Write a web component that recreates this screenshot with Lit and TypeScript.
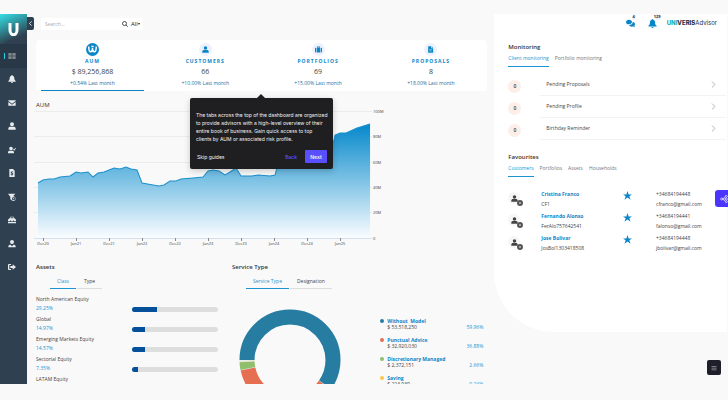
import { LitElement, css, html, nothing, svg } from 'lit';
import { customElement } from 'lit/decorators.js';
import { classMap } from 'lit/directives/class-map.js';
import { styleMap } from 'lit/directives/style-map.js';

// Icons share a 24x24 box and take the current text colour
const icons = {
  grid: svg`<path d="M1 3h10v8H1zM13 3h10v8H13zM1 13h10v8H1zM13 13h10v8H13z"/>`,
  bell: svg`<path d="M12 0a2 2 0 0 0-2 2C6 3 5 7 5 10c0 4-1 6-4 8v2h22v-2c-3-2-4-4-4-8 0-3-1-7-5-8a2 2 0 0 0-2-2zM9 21a3 3 0 0 0 6 0z"/>`,
  mail: svg`<path d="M1 4h22v2l-11 8L1 6zM1 9l11 8 11-8v11H1z"/>`,
  user: svg`<path d="M12 1a6 6 0 1 1 0 12 6 6 0 0 1 0-12zM1 23v-4c0-3 3-5 6-5h10c3 0 6 2 6 5v4z"/>`,
  userTie: svg`<path fill-rule="evenodd" d="M12 0a6 6 0 1 1 0 12 6 6 0 0 1 0-12zM1 22v-3c0-3 3-5 7-5l3 5 1-3 1 3 3-5c4 0 7 2 7 5v3z"/>`,
  userCheck: svg`<path d="M9 2a5 5 0 1 1 0 11A5 5 0 0 1 9 2zM0 22v-3c0-3 2-5 5-5h8c3 0 5 2 5 5v3zM15 10l2-2 2 2 4-5 1 2-5 7z"/>`,
  doc: svg`<path fill-rule="evenodd" d="M4 0h11l5 5v19H4zM11 6v2c-4 1-4 5 0 6 2 1 2 2 0 2H8v2h3v2h2v-2c4-1 4-5 0-6-2-1-2-2 0-2h3V8h-3V6z"/>`,
  filter: svg`<path fill-rule="evenodd" d="M0 2h22l-7 8a7 7 0 1 1-4 12l-4-3v-8zM17 12a5 5 0 1 0 0 10 5 5 0 0 0 0-10zM16 14h2v3h2v2h-4z"/>`,
  briefcase: svg`<path fill-rule="evenodd" d="M7 7V2h10v5h3l4 4v4h-6v-2h-2v2H8v-2H6v2H0v-4l4-4zM9 4v3h6V4zM0 17h6v1h2v-1h8v1h2v-1h6v5H0z"/>`,
  suitcase: svg`<path fill-rule="evenodd" d="M7 6V2h10v4h1v16H6V6zM9 4v2h6V4zM0 8l2-2h2v16H2l-2-2zM24 8l-2-2h-2v16h2l2-2z"/>`,
  logout: svg`<path d="M9 3v3H4v12h5v3H3c-2 0-3-1-3-3V6c0-2 1-3 3-3zM14 4l10 8-10 8v-5H7V9h7z"/>`,
  file: svg`<path fill-rule="evenodd" d="M4 1h10v7h7v15H4zM16 1l5 5h-5zM8 12v2h8v-2zM8 16v2h8v-2z"/>`,
  chat: svg`<path d="M8 2c5 0 8 3 8 6s-3 6-8 6c-2 0-3 0-4-1l-4 1 2-3C0 9 0 9 0 8c0-3 3-6 8-6zM18 8c4 1 6 3 6 6 0 1 0 2-2 4l2 4-5-2c-5 1-9 0-11-4 6 0 10-3 10-8z"/>`,
  star: svg`<path d="M12 0l3 9h9l-7 5 3 9-8-6-8 6 3-9-7-5h9z"/>`,
  chevron: svg`<path fill="none" stroke="currentColor" stroke-width="3" d="M7 2l10 10L7 22"/>`,
  collapse: svg`<path fill="none" stroke="currentColor" stroke-width="4" d="M17 2L7 12l10 10"/>`,
  search: svg`<path fill="none" stroke="currentColor" stroke-width="3" d="M10 2a8 8 0 1 1 0 16 8 8 0 0 1 0-16zM16 16l7 7"/>`,
  share: svg`<path fill="none" stroke="currentColor" stroke-width="2" d="M8 12l8-7M8 12h8M8 12l8 7M5 9a3 3 0 1 1 0 6 3 3 0 0 1 0-6zM19 1a3 3 0 1 1 0 6 3 3 0 0 1 0-6zM19 9a3 3 0 1 1 0 6 3 3 0 0 1 0-6zM19 17a3 3 0 1 1 0 6 3 3 0 0 1 0-6z"/>`,
  menu: svg`<path d="M2 4h20v3H2zM2 11h20v3H2zM2 18h20v3H2z"/>`,
  brand: svg`<path fill="none" stroke="currentColor" stroke-width="4" d="M2 4c0 8 1 14 5 14s5-5 5-10c0 5 1 10 5 10s5-6 5-14M9 4h6"/>`,
};

type IconName = keyof typeof icons;

const icon = (name: IconName) =>
  html`<svg class="icon" viewBox="0 0 24 24" aria-hidden="true">${icons[name]}</svg>`;

const NAV: [IconName, string][] = [
  ['grid', 'Dashboard'],
  ['bell', 'Alerts'],
  ['mail', 'Mail'],
  ['user', 'Customers'],
  ['userCheck', 'Prospects'],
  ['doc', 'Proposals'],
  ['filter', 'Filters'],
  ['briefcase', 'Portfolios'],
  ['userTie', 'Profile'],
  ['logout', 'Log out'],
];

const STATS: { icon: IconName; label: string; value: string; delta: string }[] = [
  { icon: 'brand', label: 'AUM', value: '$ 89,256,868', delta: '+0.54% Last month' },
  { icon: 'user', label: 'CUSTOMERS', value: '66', delta: '+10.00% Last month' },
  { icon: 'suitcase', label: 'PORTFOLIOS', value: '69', delta: '+15.00% Last month' },
  { icon: 'file', label: 'PROPOSALS', value: '8', delta: '+18.00% Last month' },
];

const AUM_LINE =
  '2,72 7,69 13,68 18,68 24,66 34,65 40,61 45,62 52,61 57,66 62,62 68,61 78,57 84,58 90,56 95,58 101,59 ' +
  '106,72 117,74 123,75 128,74 134,70 140,70 145,68 157,67 167,66 172,60 177,59 183,60 189,64 194,61 ' +
  '200,57 205,65 216,65 222,64 234,65 239,64 241,56 246,46 270,45 290,40 297,33 299,24 304,22 310,22 321,17 334,13';
const MONTHS = ['Dec20', 'Jun21', 'Dec21', 'Jun22', 'Dec22', 'Jun23', 'Dec23', 'Jun24', 'Dec24', 'Jun25'];
const LEVELS = ['100M', '80M', '60M', '40M', '20M', '0'];

const ASSETS: { name: string; share?: number }[] = [
  { name: 'North American Equity', share: 29.25 },
  { name: 'Global', share: 14.97 },
  { name: 'Emerging Markets Equity', share: 14.57 },
  { name: 'Sectorial Equity', share: 7.35 },
  { name: 'LATAM Equity' },
];

const SERVICES = [
  { name: 'Without  Model', amount: '$ 53,518,250', share: 59.96, color: '#277da1' },
  { name: 'Punctual Advice', amount: '$ 32,920,030', share: 36.88, color: '#e76f51' },
  { name: 'Discretionary Managed', amount: '$ 2,372,151', share: 2.66, color: '#90be6d' },
  { name: 'Saving', amount: '$ 223,939', share: 0.24, color: '#f9c74f' },
];

const MONITORING = ['Pending Proposals', 'Pending Profile', 'Birthday Reminder'];

const FAVOURITES = [
  { name: 'Cristina Franco', code: 'CF1', phone: '+34684194448', mail: 'cfranco@gmail.com' },
  { name: 'Fernando Alonso', code: 'FerAlo757642541', phone: '+34684194441', mail: 'falonso@gmail.com' },
  { name: 'Jose Bolivar', code: 'JosBol1303418508', phone: '+34684194448', mail: 'jbolivar@gmail.com' },
];

@customElement('app-root')
export class AppRoot extends LitElement {
  static styles = css`
    :host {
      display: block;
      font: 5px/8px 'Open Sans', 'Noto Sans', sans-serif;
      color: #444;
    }
    * {
      box-sizing: border-box;
    }
    button,
    input,
    select {
      font: inherit;
      color: inherit;
      background: none;
      border: 0;
      margin: 0;
      padding: 0;
      min-width: 0;
    }
    h2,
    p,
    ul {
      margin: 0;
      padding: 0;
      list-style: none;
    }
    a {
      color: inherit;
      text-decoration: none;
    }
    h2 {
      font-size: 6px;
      font-weight: 600;
      color: #333;
    }
    .icon {
      display: block;
      flex: none;
      width: 8px;
      height: 8px;
      fill: currentColor;
    }
    .page {
      height: 100vh;
      padding: 14px 0 16px;
      background: #f9f9f9;
      overflow: hidden;
    }
    .shell {
      position: relative;
      height: 100%;
      display: grid;
      grid-template-columns: 27px 2fr 1fr;
      overflow: hidden;
    }

    /* sidebar */
    .side {
      background: #2f4050;
    }
    .logo {
      height: 30px;
      display: grid;
      place-items: center;
      background: linear-gradient(155deg, #37dfe6 0%, #30a2ab 30%, #2f4050 75%);
    }
    .logo svg {
      width: 12px;
      height: 14px;
    }
    .nav {
      height: 235px;
      display: grid;
      grid-auto-rows: 1fr;
    }
    .nav a {
      display: flex;
      align-items: center;
      padding-left: 8px;
      color: #e8ebee;
    }
    .nav .current {
      color: #7b858f;
      background: #293846;
      padding-left: 4px;
      gap: 3px;
    }
    .current::before {
      content: '';
      width: 1px;
      height: 6px;
      background: #23d5e0;
    }
    .collapse {
      position: absolute;
      left: 27px;
      top: 3px;
      width: 7px;
      height: 13px;
      display: grid;
      place-items: center;
      color: #fff;
      background: #2f4050;
      border-radius: 0 2px 2px 0;
    }
    .collapse .icon {
      width: 5px;
      height: 5px;
    }

    /* main column */
    .main {
      position: relative;
      min-width: 0;
      padding: 4px 7px 0 9px;
    }
    .search {
      display: flex;
      align-items: center;
      width: 102px;
      height: 12px;
      margin-left: 5px;
      padding: 0 3px 0 4px;
      background: #fff;
    }
    .search input {
      flex: 1;
    }
    .search input::placeholder {
      color: #aaa;
    }
    .search .icon {
      width: 6px;
      height: 6px;
      color: #222;
    }
    .search select {
      appearance: none;
      margin-left: 3px;
      font-size: 6px;
      color: #222;
    }
    .caret {
      border: 1px solid transparent;
      border-top: 2px solid #222;
    }
    .stats {
      display: grid;
      grid-template-columns: repeat(4, 1fr);
      height: 51px;
      margin-top: 10px;
      background: #fff;
      border-radius: 4px;
    }
    .stat {
      display: flex;
      flex-direction: column;
      align-items: center;
      margin: 0 5px;
      padding-top: 3px;
      border-bottom: 1px solid transparent;
      text-align: center;
    }
    .stat.on {
      border-color: #0b84c6;
    }
    .disc {
      display: grid;
      place-items: center;
      width: 13px;
      height: 13px;
      border-radius: 50%;
      color: #0a86c8;
      background: #edf1fd;
    }
    .disc .icon {
      width: 7px;
      height: 7px;
    }
    .on .disc {
      color: #fff;
      background: #0a86c8;
    }
    .on .disc .icon {
      width: 9px;
      height: 9px;
    }
    .stat-label {
      margin-top: 1px;
      font-weight: 700;
      letter-spacing: 1px;
      color: #0a86c8;
    }
    .stat-value {
      margin-top: 3px;
      font-size: 7px;
    }
    .stat-delta {
      margin-top: 3px;
      color: #246f9f;
    }
    .aum-title {
      margin-top: 10px;
      font-weight: 400;
    }
    .chart {
      display: block;
      width: 80%;
      margin-top: 2px;
      overflow: visible;
    }
    .chart text {
      font-size: 4px;
      fill: #444;
    }
    .panels {
      display: grid;
      grid-template-columns: 196px 1fr;
      margin-top: 14px;
    }
    .switch {
      display: flex;
      gap: 1px;
      margin: 6px 0 0 14px;
    }
    .switch button {
      height: 12px;
      padding: 0 7px 4px;
      border-bottom: 1px solid #ddd;
    }
    .switch .on {
      color: #1c94d2;
      border-color: #1c94d2;
    }
    .asset {
      display: grid;
      grid-template-columns: 96px 86px;
      align-items: start;
      height: 20px;
      line-height: 9px;
    }
    .assets {
      margin-top: 6px;
    }
    .pct {
      color: #1c94d2;
    }
    .bar {
      height: 5px;
      margin-top: 12px;
      border-radius: 3px;
      background: #dedede;
      overflow: hidden;
    }
    .fill {
      height: 100%;
      background: #04509a;
    }
    .service {
      display: flex;
      justify-content: space-between;
      margin-top: 20px;
      padding: 0 4px 0 7px;
    }
    .donut {
      width: 102px;
      height: 102px;
    }
    .legend {
      width: 103px;
      margin-top: 9px;
    }
    .legend li {
      display: grid;
      grid-template-columns: 7px 1fr auto;
      align-items: center;
      height: 19px;
      line-height: 6px;
      align-content: start;
    }
    .dot {
      width: 4px;
      height: 4px;
      border-radius: 50%;
    }
    .strong {
      grid-column: 2 / 4;
      font-weight: 700;
      color: #0a86c8;
      white-space: pre;
    }
    .amount {
      grid-column: 2;
    }

    /* product tour */
    .tour {
      position: absolute;
      left: 163px;
      top: 84px;
      width: 143px;
      height: 71px;
      padding: 13px 6px 6px;
      border-radius: 2px;
      font-family: Inter, sans-serif;
      color: #f2f2f2;
      background: #1f1f21;
      box-shadow: 0 2px 6px #0003;
      white-space: nowrap;
    }
    .tour::before {
      content: '';
      position: absolute;
      left: 67px;
      top: -4px;
      border: 4px solid transparent;
      border-top: 0;
      border-bottom-color: #1f1f21;
    }
    .tour-actions {
      display: flex;
      align-items: center;
      gap: 8px;
      margin-top: 7px;
    }
    .tour-actions button {
      height: 13px;
    }
    .skip {
      margin: 0 auto 0 1px;
    }
    .tour-actions .back {
      font-weight: 500;
      color: #5a4fff;
    }
    .tour-actions .next {
      width: 22px;
      font-weight: 600;
      border-radius: 1px;
      background: #5a4fff;
    }

    /* right column */
    .aside {
      align-self: start;
      height: 318px;
      background: #fff;
      border-bottom-left-radius: 60px;
      border-right: 1px solid #fafafa;
      padding: 0 1px 0 14px;
    }
    .top {
      display: flex;
      justify-content: flex-end;
      align-items: center;
      height: 18px;
      padding-right: 9px;
    }
    .alert {
      position: relative;
      margin-right: 13px;
      color: #0a86c8;
    }
    .alert:last-of-type {
      margin-right: 10px;
    }
    .alert .icon {
      width: 9px;
      height: 9px;
    }
    .badge {
      position: absolute;
      left: 6px;
      top: -5px;
      min-width: 4px;
      border-radius: 4px;
      font-size: 4px;
      line-height: 6px;
      font-weight: 700;
      color: #333;
      background: #edf1fd;
    }
    .wordmark {
      font: 6px/8px Inter, sans-serif;
      color: #1e2f45;
    }
    .wordmark b {
      font-weight: 800;
    }
    .uni {
      color: #14aeb9;
    }
    .monitoring {
      margin-top: 11px;
    }
    .tabs {
      display: flex;
      gap: 6px;
      margin-top: 3px;
      color: #777;
    }
    .tabs button {
      height: 13px;
      padding-bottom: 4px;
      border-bottom: 1px solid transparent;
    }
    .tabs .on {
      color: #1c94d2;
      border-color: #1c94d2;
    }
    .tasks {
      margin-top: 7px;
    }
    .task {
      display: grid;
      grid-template-columns: 32px 1fr;
      align-items: center;
      height: 22px;
    }
    .count {
      display: grid;
      place-items: center;
      width: 13px;
      height: 13px;
      margin-top: 2px;
      border-radius: 50%;
      font-weight: 600;
      background: #fdeee8;
    }
    .task a {
      display: flex;
      justify-content: space-between;
      height: 22px;
      padding: 6px 9px 0 6px;
      border-bottom: 1px solid #f3f3f3;
    }
    .task .icon {
      width: 7px;
      height: 7px;
      margin-top: 1px;
      color: #aaa;
    }
    .favourites {
      margin-top: 13px;
    }
    .people {
      margin-top: 12px;
    }
    .person {
      display: grid;
      grid-template-columns: 33px 1fr 29px 70px;
      height: 22px;
      line-height: 10px;
    }
    .avatar {
      position: relative;
      display: grid;
      place-items: center;
      width: 12px;
      height: 12px;
      margin-top: 3px;
      border-radius: 50%;
      color: #444;
      background: #f6f6f6;
    }
    .avatar .icon {
      width: 7px;
      height: 7px;
    }
    .tag {
      position: absolute;
      right: -3px;
      bottom: -2px;
      width: 6px;
      height: 6px;
      border-radius: 50%;
      border: 2px solid #555;
      background: #bbb;
    }
    .person .star {
      align-self: start;
      justify-self: start;
      margin: 2px 0 0 -4px;
      color: #0a86c8;
    }
    .star .icon {
      width: 9px;
      height: 9px;
    }
    .share {
      position: absolute;
      right: 0;
      top: 176px;
      width: 13px;
      height: 17px;
      padding-left: 5px;
      overflow: hidden;
      border-radius: 3px 0 0 3px;
      color: #fff;
      background: #4a35ff;
    }
    .menu {
      position: absolute;
      right: 7px;
      bottom: 9px;
      width: 14px;
      height: 15px;
      display: grid;
      place-items: center;
      border-radius: 2px;
      color: #999;
      background: #1f1f2b;
    }
    .menu .icon {
      width: 6px;
      height: 6px;
    }
  `;

  private renderTabs(labels: string[], kind: string) {
    return html`
      <div class=${kind} role="tablist">
        ${labels.map(
          (label, i) => html`<button role="tab" class=${classMap({ on: i === 0 })}>${label}</button>`,
        )}
      </div>
    `;
  }

  private renderChart() {
    return html`
      <svg class="chart" viewBox="0 0 361 138" role="img" aria-label="AUM by month">
        <defs>
          <linearGradient id="fade" x1="0" y1="0" x2="0" y2="1">
            <stop offset="0" stop-color="#0488cb" />
            <stop offset="1" stop-color="#fafdff" />
          </linearGradient>
        </defs>
        ${LEVELS.map((label, i) => {
          const y = 1 + Math.round(i * 25.3);
          return svg`
            <path d="M-2 ${y - 0.5}H336" stroke=${label === '0' ? '#d5dff0' : '#ececec'} />
            <text x="337" y=${y + 1}>${label}</text>
          `;
        })}
        <polygon points="2,127 ${AUM_LINE} 334,127" fill="url(#fade)" />
        <polyline points=${AUM_LINE} fill="none" stroke="#1b90cc" />
        ${MONTHS.map(
          (label, i) => svg`
            <path d="M${7.5 + i * 33} 127v3" stroke="#888" />
            <text x=${7 + i * 33} y="134" text-anchor="middle">${label}</text>
          `,
        )}
      </svg>
    `;
  }

  private renderDonut() {
    // slices run clockwise from nine o'clock, radius 43 with a 15px ring
    let start = 0;
    return html`
      <svg class="donut" viewBox="0 0 102 102" role="img" aria-label="Service type split">
        <circle cx="51" cy="51" r="43" fill="none" stroke="#e3eef3" stroke-width="15" />
        ${SERVICES.map((s) => {
          const slice = svg`
            <circle cx="51" cy="51" r="43" fill="none" stroke=${s.color} stroke-width="15"
              pathLength="100" stroke-dasharray="${Math.max(s.share - 0.2, 0.1)} 100"
              stroke-dashoffset=${-start} transform="rotate(180 51 51)" />
          `;
          start += s.share;
          return slice;
        })}
      </svg>
    `;
  }

  private renderAsset(name: string, share?: number) {
    return html`
      <li class="asset">
        <div>
          <p>${name}</p>
          ${share ? html`<p class="pct">${share}%</p>` : nothing}
        </div>
        ${share
          ? html`<div class="bar"><div class="fill" style=${styleMap({ width: `${share}%` })}></div></div>`
          : nothing}
      </li>
    `;
  }

  private renderMain() {
    return html`
      <main class="main">
        <div class="search">
          <input type="text" placeholder="Search..." aria-label="Search" />
          ${icon('search')}
          <select aria-label="Scope">
            <option>All</option>
          </select>
          <span class="caret"></span>
        </div>
        <div class="stats" role="tablist">
          ${STATS.map(
            (s, i) => html`
              <button role="tab" class=${classMap({ stat: true, on: i === 0 })}>
                <span class="disc">${icon(s.icon)}</span>
                <span class="stat-label">${s.label}</span>
                <span class="stat-value">${s.value}</span>
                <span class="stat-delta">${s.delta}</span>
              </button>
            `,
          )}
        </div>
        <h2 class="aum-title">AUM</h2>
        ${this.renderChart()}
        <div class="panels">
          <section>
            <h2>Assets</h2>
            ${this.renderTabs(['Class', 'Type'], 'switch')}
            <ul class="assets">
              ${ASSETS.map((a) => this.renderAsset(a.name, a.share))}
            </ul>
          </section>
          <section>
            <h2>Service Type</h2>
            ${this.renderTabs(['Service Type', 'Designation'], 'switch')}
            <div class="service">
              ${this.renderDonut()}
              <ul class="legend">
                ${SERVICES.map(
                  (s) => html`
                    <li>
                      <span class="dot" style=${styleMap({ background: s.color })}></span>
                      <span class="strong">${s.name}</span>
                      <span class="amount">${s.amount}</span>
                      <span class="pct">${s.share}%</span>
                    </li>
                  `,
                )}
              </ul>
            </div>
          </section>
        </div>
        <div class="tour" role="dialog" aria-label="Guide">
          <p>
            The tabs across the top of the dashboard are organized<br />
            to provide advisors with a high-level overview of their<br />
            entire book of business. Gain quick access to top<br />
            clients by AUM or associated risk profile.
          </p>
          <div class="tour-actions">
            <button class="skip">Skip guides</button>
            <button class="back">Back</button>
            <button class="next">Next</button>
          </div>
        </div>
      </main>
    `;
  }

  private renderAside() {
    return html`
      <aside class="aside">
        <div class="top">
          <button class="alert" aria-label="Messages">${icon('chat')}<span class="badge">4</span></button>
          <button class="alert" aria-label="Notifications">${icon('bell')}<span class="badge">129</span></button>
          <span class="wordmark"><b><span class="uni">UNI</span>VERIS</b>Advisor</span>
        </div>
        <section class="monitoring">
          <h2>Monitoring</h2>
          ${this.renderTabs(['Client monitoring', 'Portfolio monitoring'], 'tabs')}
          <ul class="tasks">
            ${MONITORING.map(
              (label) => html`
                <li class="task">
                  <span class="count">0</span>
                  <a href="#">${label}${icon('chevron')}</a>
                </li>
              `,
            )}
          </ul>
        </section>
        <section class="favourites">
          <h2>Favourites</h2>
          ${this.renderTabs(['Customers', 'Portfolios', 'Assets', 'Households'], 'tabs')}
          <ul class="people">
            ${FAVOURITES.map(
              (f) => html`
                <li class="person">
                  <span class="avatar">${icon('user')}<span class="tag"></span></span>
                  <div>
                    <a class="strong" href="#">${f.name}</a>
                    <p>${f.code}</p>
                  </div>
                  <button class="star" aria-label="Favourite">${icon('star')}</button>
                  <div>
                    <p>${f.phone}</p>
                    <p>${f.mail}</p>
                  </div>
                </li>
              `,
            )}
          </ul>
        </section>
      </aside>
    `;
  }

  render() {
    return html`
      <div class="page">
        <div class="shell">
          <nav class="side">
            <div class="logo">
              <svg viewBox="0 0 12 14" aria-hidden="true">
                <path d="M2 1v7a3 4 0 0 0 7 0V1" fill="none" stroke="#fff" stroke-width="3" />
              </svg>
            </div>
            <div class="nav">
              ${NAV.map(
                ([name, label], i) => html`
                  <a href="#" aria-label=${label} class=${classMap({ current: i === 0 })}>${icon(name)}</a>
                `,
              )}
            </div>
          </nav>
          ${this.renderMain()} ${this.renderAside()}
          <button class="collapse" aria-label="Collapse">${icon('collapse')}</button>
          <button class="share" aria-label="Share">${icon('share')}</button>
          <button class="menu" aria-label="Menu">${icon('menu')}</button>
        </div>
      </div>
    `;
  }
}

declare global {
  interface HTMLElementTagNameMap {
    'app-root': AppRoot;
  }
}
